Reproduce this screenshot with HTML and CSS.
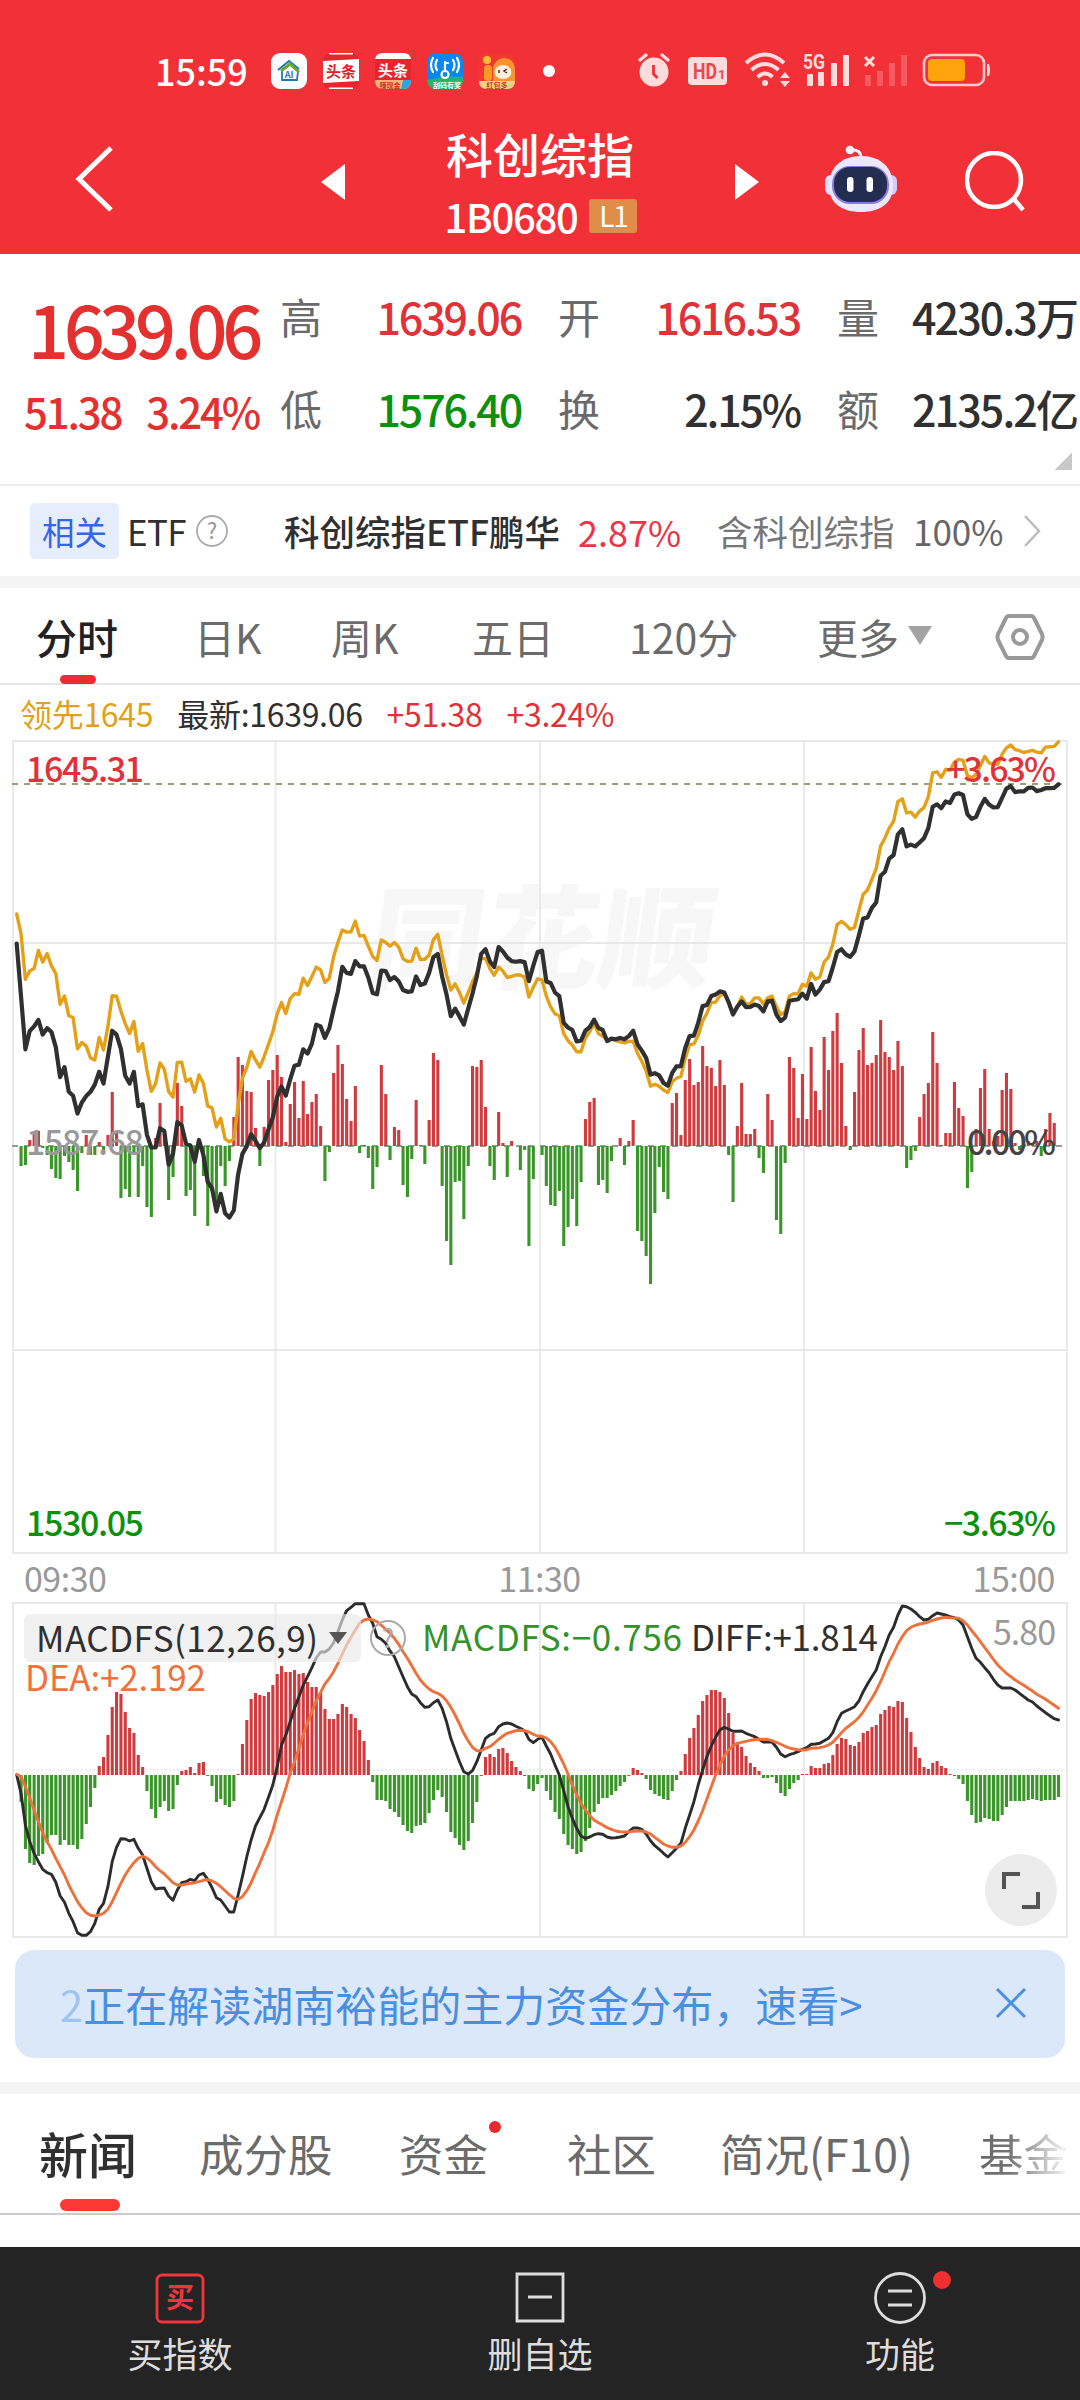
FILE: index.html
```
<!DOCTYPE html>
<html lang="zh-CN">
<head>
    <meta charset="UTF-8">
    <meta name="viewport" content="width=device-width, initial-scale=1.0">
    <title>科创综指 1B0680</title>
    <link rel="stylesheet" href="styles.css">
</head>
<body>
    <header class="top">
        <div class="status">
            <span class="clock">15:59</span>
            <div class="apps">
                <svg class="app" viewBox="0 0 36 36"><rect width="36" height="36" rx="9" fill="#fff"/><path d="M11 18v9h15l1-9" fill="none" stroke="#1c7ab8" stroke-width="1.800"/><path d="M7 17 18 8l10 8" fill="none" stroke="#1c7ab8" stroke-width="2"/><path d="m10 18 9-7 9 8" fill="none" stroke="#6aa92f" stroke-width="3"/><text x="18" y="25" class="app-ai">AI</text></svg>
                <svg class="app" viewBox="0 0 36 36"><rect width="36" height="36" rx="8" fill="#e8252c"/><path d="M0 8 36 6v22L0 30Z" fill="#fff"/><path d="M6 .8h24M6 35.200h24" stroke="#fff" stroke-width="1.500"/><text x="18" y="24" class="app-red">头条</text></svg>
                <svg class="app" viewBox="0 0 36 36"><rect width="36" height="36" rx="8" fill="#e8252c"/><path d="M8 0h20q7 0 8 6H0q1-6 8-6Z" fill="#fff"/><path d="M0 27h36q0 9-8 9H8q-8 0-8-9Z" fill="#f6b47c"/><path d="M28 27h8q0 9-8 9h-2Z" fill="#2ba6e0"/><text x="18" y="22.500" class="app-white">头条</text><text x="15" y="34.500" class="app-mini app-mini-red">赚现金</text></svg>
                <svg class="app" viewBox="0 0 36 36"><rect width="36" height="36" rx="9" fill="#0b87f0"/><path d="M0 27q18-5 36-3v4q-1 8-9 8H9q-8 0-9-9Z" fill="#1fb866"/><g fill="none" stroke="#fff" stroke-width="2.200" stroke-linecap="round"><path d="M10 7q-3 5 0 10M6 5q-4 7 0 14M26 7q3 5 0 10M30 5q4 7 0 14M18 9v9M18 10h3"/><circle cx="18" cy="21.500" r="3.500"/></g><text x="20" y="34.500" class="app-mini">刮码有奖</text></svg>
                <svg class="app" viewBox="0 0 36 36"><rect width="36" height="36" rx="8" fill="#f0382f"/><rect x="5" y="12" width="8" height="16" rx="3.500" fill="#f79a28"/><circle cx="8" cy="7" r="4" fill="#fdbc35"/><path d="M14 16q1-10 11-11 11 1 11 12v11H14Z" fill="#f9932f"/><ellipse cx="24" cy="19" rx="8.500" ry="7" fill="#fff0df"/><path d="M20 17v3M28 16l-3 2 3 2" stroke="#5b2c12" stroke-width="1.500" fill="none"/><path d="M0 28h36q0 8-8 8H8q-8 0-8-8Z" fill="#f9cf8a"/><text x="18" y="34.800" class="app-mini app-mini-red">红包多</text></svg>
            </div>
            <i class="more-dot"></i>
            <svg class="sys" viewBox="0 0 356 44" fill="#ffdcdc">
                <circle cx="17" cy="24" r="14.500"/><path d="M3 12 9 7M31 12l-6-5" stroke="#ffdcdc" stroke-width="3.500" stroke-linecap="round"/><path d="M16.500 17v9l4 4" fill="none" stroke="#f23037" stroke-width="2.800"/>
                <rect x="51" y="9" width="39" height="28" rx="4"/><text x="56" y="31" class="hd" textLength="24" lengthAdjust="spacingAndGlyphs">HD</text><text x="81" y="31" class="hd hd-sub">1</text>
                <g fill="none" stroke="#ffdcdc" stroke-width="4"><path d="M109 15q19-17 38 0M114.500 22q13.500-12 27 0M120.500 29q7.500-7 15 0"/></g><circle cx="128" cy="35" r="3"/><path d="m143 30 5-6 5 6ZM143 33l5 6 5-6Z"/>
                <text x="166" y="21" class="fiveg" textLength="22" lengthAdjust="spacingAndGlyphs">5G</text><rect x="170" y="26" width="6" height="12" rx="1"/><rect x="181" y="24" width="6" height="14" rx="1"/><rect x="194" y="15" width="6" height="23" rx="1"/><rect x="206" y="7" width="6" height="31" rx="1"/>
                <path d="m228 9 9 9M237 9l-9 9" stroke="#ffdcdc" stroke-width="3"/><g opacity=".25"><rect x="228" y="27" width="6" height="11"/><rect x="240" y="23" width="6" height="15"/><rect x="252" y="15" width="6" height="23"/><rect x="264" y="7" width="6" height="31"/></g>
                <rect x="287" y="7" width="60" height="30" rx="8" fill="none" stroke="#ffc9c9" stroke-width="2.600"/><rect x="291" y="11" width="37" height="22" rx="4" fill="#ffa40d"/><path d="M350 16h2q2 6 0 12h-2Z"/>
            </svg>
        </div>
        <nav class="title-bar">
            <svg class="back" viewBox="0 0 40 68"><path d="M36 3 4 34l32 31" fill="none" stroke="#fff" stroke-width="5"/></svg>
            <svg class="prev" viewBox="0 0 24 36"><path d="M24 0v36L0 18Z" fill="#fff"/></svg>
            <div class="name">
                <h1>科创综指</h1>
                <p><span>1B0680</span><b class="level">L1</b></p>
            </div>
            <svg class="next" viewBox="0 0 24 36"><path d="M0 0v36l24-18Z" fill="#fff"/></svg>
            <svg class="robot" viewBox="0 0 74 70">
                <path d="M37 14q0-9-10-8" fill="none" stroke="#f3f0ff" stroke-width="3"/><circle cx="26" cy="6" r="4.300" fill="#f6f3ff"/>
                <rect x="1" y="31" width="12" height="20" rx="6" fill="#e2dcfb"/><rect x="61" y="31" width="12" height="20" rx="6" fill="#d3ccf8"/>
                <path d="M37 12c20 0 32 12 32 30S55 68 37 68 5 60 5 42s12-30 32-30Z" fill="#ebe8fd"/><rect x="8" y="22" width="57" height="38" rx="18" fill="#8a7be0"/><rect x="10" y="23" width="53" height="35" rx="16" fill="#232d4f"/>
                <rect x="23" y="33" width="6.500" height="15" rx="3.200" fill="#fff"/><rect x="42.500" y="33" width="6.500" height="15" rx="3.200" fill="#fff"/>
            </svg>
            <svg class="search" viewBox="0 0 62 62"><circle cx="29" cy="29" r="27" fill="none" stroke="#fff" stroke-width="4.500"/><path d="m48 47 10 12" stroke="#fff" stroke-width="4.500"/></svg>
        </nav>
    </header>

    <section class="quote">
        <div class="last">
            <strong>1639.06</strong>
            <p><span>51.38</span><span>3.24%</span></p>
        </div>
        <dl class="stats">
            <dt>高</dt><dd class="up">1639.06</dd>
            <dt>开</dt><dd class="up">1616.53</dd>
            <dt>量</dt><dd>4230.3万</dd>
            <dt>低</dt><dd class="down">1576.40</dd>
            <dt>换</dt><dd>2.15%</dd>
            <dt>额</dt><dd>2135.2亿</dd>
        </dl>
        <i class="expand"></i>
    </section>

    <section class="related">
        <span class="tag">相关</span>
        <span class="etf">ETF</span>
        <svg class="help" viewBox="0 0 34 34"><circle cx="17" cy="17" r="15" fill="none" stroke="#aaa" stroke-width="1.800"/><text x="17" y="25">?</text></svg>
        <span class="fund">科创综指ETF鹏华</span>
        <span class="fund-rate">2.87%</span>
        <span class="contain">含科创综指</span>
        <span class="contain-rate">100%</span>
        <svg class="arrow" viewBox="0 0 18 32"><path d="m2 1 14 15L2 31" fill="none" stroke="#bbb" stroke-width="2.500"/></svg>
    </section>

    <nav class="periods">
        <span class="active">分时</span>
        <span>日K</span>
        <span>周K</span>
        <span>五日</span>
        <span>120分</span>
        <span class="more">更多</span>
        <svg class="setting" viewBox="0 0 50 48"><path d="M14 3h22q2 0 3 2l8 16q1 3 0 6l-8 16q-1 2-3 2H14q-2 0-3-2L3 27q-1-3 0-6l8-16q1-2 3-2Z" fill="none" stroke="#999" stroke-width="4"/><circle cx="25" cy="24" r="7" fill="none" stroke="#999" stroke-width="4"/></svg>
    </nav>

    <section class="chart">
        <p class="legend"><span class="lead">领先1645</span><span class="now">最新:1639.06</span><span class="up">+51.38</span><span class="up">+3.24%</span></p>
        <svg id="price" class="price" viewBox="0 0 1080 824">
            <g class="watermark" transform="translate(30 0) skewX(-8)"><text x="370" y="250" textLength="345" lengthAdjust="spacingAndGlyphs">同花顺</text></g>
            <path class="grid" d="M13 11H1067V823H13ZM275.500 11V823M540 11V823M804 11V823M13 213H1067M13 620H1067"/>
            <path class="ref-line" d="M12 54H1067"/>
            <path class="zero-line" d="M12 416H1067"/>
            <g id="force"></g>
            <polyline id="lead" class="line lead-line"/>
            <polyline id="index" class="line index-line"/>
            <text x="26" y="52" class="axis up" textLength="118">1645.31</text>
            <text x="1056" y="52" class="axis up end" textLength="110">+3.63%</text>
            <text x="26" y="425" class="axis mid" textLength="118">1587.68</text>
            <text x="1056" y="425" class="axis zero end" textLength="89">0.00%</text>
            <text x="26" y="806" class="axis down" textLength="118">1530.05</text>
            <text x="1056" y="806" class="axis down end" textLength="112">−3.63%</text>
        </svg>
        <div class="times"><span>09:30</span><span>11:30</span><span>15:00</span></div>
        <svg id="macd" class="macd" viewBox="0 0 1080 340">
            <path class="grid" d="M13 3H1067V337H13ZM275.500 3V337M540 3V337M804 3V337"/>
            <path class="zero-dots" d="M13 170H1067"/>
            <g id="macdBars"></g>
            <polyline id="diff" class="line diff-line"/>
            <polyline id="dea" class="line dea-line"/>
            <rect x="24" y="14" width="337" height="48" rx="6" class="picker"/>
            <text x="36" y="52" class="label" textLength="282">MACDFS(12,26,9)</text>
            <path d="M329 32h18l-9 12Z" fill="#555"/>
            <circle cx="388" cy="38" r="17" class="tip"/><text x="388" y="48" class="tip-mark">?</text>
            <text x="422" y="51" class="label green" textLength="260">MACDFS:−0.756</text>
            <text x="691" y="51" class="label" textLength="187">DIFF:+1.814</text>
            <text x="25" y="91" class="label orange" textLength="181">DEA:+2.192</text>
            <text x="1056" y="45" class="axis grey end" textLength="63">5.80</text>
            <circle cx="1021" cy="290" r="36" fill="#ececec"/>
            <path d="M1004 289v-15h16M1022 307h16v-15" fill="none" stroke="#555" stroke-width="4"/>
        </svg>
    </section>

    <aside class="notice">
        <p><i>2</i>正在解读湖南裕能的主力资金分布，速看&gt;</p>
        <svg viewBox="0 0 32 32"><path d="m2 2 28 28M30 2 2 30" stroke="#4a90e2" stroke-width="3"/></svg>
    </aside>

    <nav class="tabs">
        <span class="active">新闻</span>
        <span>成分股</span>
        <span class="dot">资金</span>
        <span>社区</span>
        <span>简况(F10)</span>
        <span class="fade">基金</span>
    </nav>

    <footer class="bottom">
        <div>
            <svg viewBox="0 0 54 54"><rect x="4" y="5" width="46" height="47" rx="5" fill="none" stroke="#f0353c" stroke-width="2.800"/><text x="27" y="38" class="buy">买</text></svg>
            <span>买指数</span>
        </div>
        <div>
            <svg viewBox="0 0 54 54"><path d="M4 4h46v47H4ZM15 27h24" fill="none" stroke="#ddd" stroke-width="2.800"/></svg>
            <span>删自选</span>
        </div>
        <div>
            <svg viewBox="0 0 54 54"><circle cx="27" cy="28" r="24.500" fill="none" stroke="#ddd" stroke-width="2.800"/><path d="M15 21h24M15 35h24" stroke="#ddd" stroke-width="3"/></svg>
            <i class="badge"></i>
            <span>功能</span>
        </div>
    </footer>
    <script src="chart.js"></script>
</body>
</html>
```
FILE: styles.css
```
* {
    box-sizing: border-box;
}
body {
    margin: 0;
    width: 1080px;
    height: 2400px;
    overflow: hidden;
    display: flex;
    flex-direction: column;
    background: #fff;
    color: #303030;
    font-family: "Noto Sans CJK SC", sans-serif;
}
p, h1, dl, dd {
    margin: 0;
}
i {
    font-style: normal;
}
svg {
    display: block;
    flex: none;
}
span {
    white-space: nowrap;
}
.up {
    color: #e03238;
    fill: #e03238;
}
.down {
    color: #0d900d;
    fill: #0d900d;
}

/* header */
.top {
    height: 254px;
    flex: none;
    background: #f23037;
    color: #fff;
}
.status {
    height: 124px;
    padding: 48px 0 30px 155px;
    display: flex;
    align-items: center;
}
.clock {
    width: 94px;
    padding-bottom: 3px;
    font-size: 36px;
    font-weight: 500;
    letter-spacing: 0;
}
.apps {
    display: flex;
    gap: 16px;
    margin-left: 22px;
}
.app {
    width: 36px;
    height: 36px;
}
.app text {
    text-anchor: middle;
    font-weight: bold;
}
.app-ai {
    font-size: 9px;
    fill: #1c7ab8;
}
.app-red {
    font-size: 15px;
    fill: #d9232a;
}
.app-white {
    font-size: 15px;
    fill: #fff;
}
.app-mini {
    font-size: 7px;
    fill: #fff;
}
.app-mini-red {
    fill: #c43a20;
}
.more-dot {
    width: 12px;
    height: 12px;
    margin-left: 28px;
    border-radius: 50%;
    background: #fff;
}
.sys {
    width: 356px;
    height: 44px;
    margin: -2px 0 0 82px;
}
.hd {
    font: bold 22px "Roboto", sans-serif;
    fill: #e8484e;
}
.hd-sub {
    font-size: 13px;
}
.fiveg {
    font: bold 20px "Roboto", sans-serif;
}
.title-bar {
    height: 130px;
    display: flex;
    align-items: center;
    padding-left: 75px;
}
.back {
    width: 40px;
    height: 68px;
    margin-top: -20px;
}
.prev {
    width: 24px;
    height: 36px;
    margin: -14px 0 0 206px;
}
.next {
    width: 24px;
    height: 36px;
    margin-top: -14px;
}
.name {
    width: 390px;
    text-align: center;
}
.name h1 {
    margin-top: -7px;
    font-size: 47px;
    line-height: 60px;
    font-weight: 500;
}
.name p {
    height: 66px;
    display: flex;
    justify-content: center;
    align-items: center;
    gap: 12px;
    padding-left: 2px;
    font-size: 40px;
    font-weight: 500;
    letter-spacing: -1.3px;
}
.level {
    width: 48px;
    height: 34px;
    border-radius: 3px;
    background: #e08d4a;
    font-size: 28px;
    font-weight: 400;
    line-height: 33px;
}
.robot {
    width: 74px;
    height: 70px;
    margin: -20px 0 0 65px;
}
.search {
    width: 62px;
    height: 62px;
    margin: -14px 0 0 67px;
}

/* quote */
.quote {
    position: relative;
    height: 232px;
    flex: none;
    display: flex;
    border-bottom: 2px solid #ececec;
}
.last {
    width: 280px;
    color: #e53030;
    padding: 25px 0 0 24px;
}
.last strong {
    display: block;
    padding-left: 4px;
    font-size: 72px;
    font-weight: 500;
    line-height: 98px;
    letter-spacing: -5.4px;
}
.last p {
    display: flex;
    gap: 25px;
    font-size: 42px;
    font-weight: 500;
    line-height: 68px;
    letter-spacing: -2.2px;
}
.stats {
    display: grid;
    grid-template-columns: 42px 199px 79px 200px 79px 1fr;
    grid-template-rows: 92px 92px;
    padding-top: 16px;
    font-size: 43px;
}
.stats dt {
    color: #6a6a6a;
    line-height: 92px;
    font-size: 42px;
}
.stats dt:nth-of-type(3n+2), .stats dt:nth-of-type(3n) {
    padding-left: 37px;
}
.stats dd {
    text-align: right;
    font-weight: 500;
    line-height: 92px;
    letter-spacing: -2.2px;
    white-space: nowrap;
}
.stats dd:nth-of-type(3n) {
    padding-left: 33px;
    text-align: left;
    letter-spacing: -1.9px;
}
.expand {
    position: absolute;
    right: 8px;
    bottom: 14px;
    width: 18px;
    height: 18px;
    background: linear-gradient(135deg, transparent 50%, #c8c8c8 50%);
}

/* related ETF row */
.related {
    height: 102px;
    flex: none;
    display: flex;
    align-items: center;
    padding: 0 0 1px 30px;
    font-size: 35px;
    border-bottom: 12px solid #f4f4f4;
}
.tag {
    width: 89px;
    height: 56px;
    border-radius: 5px;
    background: #e6edfc;
    color: #3565e8;
    font-size: 32.5px;
    line-height: 55px;
    text-align: center;
}
.etf {
    margin-left: 8px;
    width: 62px;
    letter-spacing: -0.7px;
}
.help {
    width: 34px;
    height: 34px;
    margin-left: 6px;
}
.help text {
    font-size: 22px;
    text-anchor: middle;
    fill: #999;
}
.fund {
    width: 276px;
    margin-left: 55px;
    font-size: 35.5px;
    font-weight: 500;
}
.fund-rate {
    width: 100px;
    margin-left: 18px;
    font-size: 36px;
    color: #ee3348;
}
.contain {
    width: 178px;
    margin-left: 39px;
    font-size: 35.5px;
    color: #777;
}
.contain-rate {
    width: 90px;
    margin-left: 18px;
    color: #666;
}
.arrow {
    width: 18px;
    height: 32px;
    margin-left: 20px;
}

/* period tabs */
.periods {
    height: 97px;
    flex: none;
    display: flex;
    align-items: center;
    border-bottom: 2px solid #e6e6e6;
    padding-left: 36px;
    font-size: 41px;
    color: #6b6b6b;
}
.periods span:nth-child(1) { width: 158px; }
.periods span:nth-child(2) { width: 137px; }
.periods span:nth-child(3) { width: 141px; }
.periods span:nth-child(4) { width: 157px; }
.periods span:nth-child(5) { width: 188px; }
.periods .active {
    position: relative;
    color: #222;
    font-weight: 500;
}
.periods .active::after {
    content: "";
    position: absolute;
    left: 24px;
    bottom: -18px;
    width: 36px;
    height: 9px;
    border-radius: 5px;
    background: #ea2e30;
}
.periods .more {
    display: flex;
    align-items: center;
    gap: 9px;
    width: 178px;
}
.more::after {
    content: "";
    border: 12px solid transparent;
    border-top: 19px solid #a3a3a3;
    border-bottom: 0;
}
.setting {
    width: 50px;
    height: 48px;
    margin-top: 2px;
}

/* charts */
.chart {
    flex: none;
}
.legend {
    height: 45px;
    padding: 6px 0 0 20px;
    display: flex;
    gap: 24px;
    font-size: 32px;
    line-height: 44px;
}
.legend .lead {
    color: #e2a11c;
}
.legend span {
    letter-spacing: -0.3px;
}
.price {
    width: 1080px;
    height: 824px;
}
.grid {
    fill: none;
    stroke: #e8e8e8;
    stroke-width: 1.8;
}
.ref-line, .zero-line {
    stroke: #a59a70;
    stroke-width: 1.8;
    stroke-dasharray: 6 6;
}
.zero-line {
    stroke: #999;
}
.zero-dots {
    stroke: #ddd;
    stroke-dasharray: 2 2;
}
.line {
    fill: none;
    stroke-linejoin: round;
    stroke-linecap: round;
}
.lead-line {
    stroke: #e3a018;
    stroke-width: 3.4;
}
.index-line {
    stroke: #303030;
    stroke-width: 4.2;
}
.diff-line {
    stroke: #2c2c2c;
    stroke-width: 2.9;
}
.dea-line {
    stroke: #ee713c;
    stroke-width: 2.9;
}
.bar-up {
    fill: #cf3b3e;
}
.bar-down {
    fill: #3b962a;
}
.watermark text {
    font-size: 112px;
    font-weight: 900;
    fill: #f7f7f7;
}
.axis {
    font-size: 34px;
    font-weight: 500;
}
.end {
    text-anchor: end;
}
.mid, .grey {
    fill: #999;
}
.zero {
    fill: #444;
}
.axis.grey {
    font-weight: 400;
}
.times {
    display: flex;
    justify-content: space-between;
    height: 46px;
    padding: 0 25px 0 24px;
    font-size: 34px;
    line-height: 48px;
    letter-spacing: -0.5px;
    color: #999;
}
.macd {
    width: 1080px;
    height: 340px;
}
.picker {
    fill: #e9e9e9;
    opacity: 0.65;
}
.label {
    font-size: 35px;
    fill: #303030;
}
.green {
    fill: #35912a;
}
.orange {
    fill: #f0713a;
}
.tip {
    fill: none;
    stroke: #aaa;
    stroke-width: 2;
}
.tip-mark {
    font-size: 26px;
    text-anchor: middle;
    fill: #aaa;
}

/* notice */
.notice {
    height: 108px;
    flex: none;
    margin: 10px 15px 24px;
    padding: 0 38px 2px 45px;
    display: flex;
    align-items: center;
    justify-content: space-between;
    border-radius: 19px;
    background: #dae8fa;
    color: #4a8fdf;
    font-size: 42px;
}
.notice i {
    opacity: 0.4;
}
.notice svg {
    width: 32px;
    height: 32px;
}

/* content tabs */
.tabs {
    height: 133px;
    flex: none;
    display: flex;
    align-items: center;
    padding: 0 0 2px 39px;
    border-top: 12px solid #f4f4f4;
    border-bottom: 2px solid #ccc;
    font-size: 44.5px;
    color: #6b6b6b;
    overflow: hidden;
}
.tabs span:nth-child(1) { width: 160px; }
.tabs span:nth-child(2) { width: 200px; }
.tabs span:nth-child(3) { width: 168px; }
.tabs span:nth-child(4) { width: 153px; }
.tabs span:nth-child(5) { width: 259px; }
.tabs span {
    position: relative;
}
.tabs .active {
    color: #303030;
    font-size: 49px;
    font-weight: 500;
}
.tabs .active::after {
    content: "";
    position: absolute;
    left: 21px;
    bottom: -23px;
    width: 60px;
    height: 12px;
    border-radius: 6px;
    background: #fb3833;
}
.tabs .dot::after {
    content: "";
    position: absolute;
    left: 90px;
    top: 1px;
    width: 12px;
    height: 12px;
    border-radius: 50%;
    background: #e8282c;
}
.tabs .fade {
    background: linear-gradient(90deg, #666, #777 35%, #eee 95%);
    background-clip: text;
    -webkit-background-clip: text;
    color: transparent;
}

/* bottom bar */
.bottom {
    height: 153px;
    flex: none;
    margin-top: auto;
    background: #242424;
    color: #ddd;
    display: grid;
    grid-template-columns: repeat(3, 1fr);
}
.bottom div {
    position: relative;
    display: flex;
    flex-direction: column;
    align-items: center;
    padding-top: 23px;
    font-size: 35px;
    line-height: 58px;
}
.bottom svg {
    width: 54px;
    height: 54px;
}
.buy {
    font-size: 28px;
    font-weight: bold;
    text-anchor: middle;
    fill: #f0353c;
}
.badge {
    position: absolute;
    left: 213px;
    top: 24px;
    width: 18px;
    height: 18px;
    border-radius: 50%;
    background: #ee3030;
}
```
FILE: chart.js
```
// one value per trading minute
const STEP = 4.341;
const LEFT = 16.7;

const indexData = [
    598,745,894,843,830,812,853,835,845,888,972,944,1013,1024,1074,1043,1025,1013,993,957,
    990,915,842,853,893,968,990,957,1053,1048,1133,1169,1169,1115,1123,1217,1187,1098,1107,1158,
    1163,1209,1148,1190,1265,1283,1348,1299,1353,1365,1345,1245,1187,1165,1132,1150,1171,1155,1118,1085,
    1027,998,1024,978,940,937,894,906,878,825,830,862,835,782,732,663,680,683,647,662,
    662,693,736,740,674,675,700,692,704,728,733,732,690,714,710,680,636,627,690,740,
    801,780,802,825,780,738,690,627,614,648,664,608,620,637,647,649,647,650,703,660,
    622,618,704,708,735,745,820,833,840,872,870,842,832,811,834,840,871,864,866,862,
    866,857,842,880,898,918,965,961,967,988,996,960,942,941,890,857,856,820,773,770,
    745,741,732,735,762,797,775,760,776,775,769,773,788,760,758,797,815,805,758,756,
    754,738,752,711,741,727,706,703,665,622,614,628,635,620,575,528,525,498,483,408,
    397,360,350,292,278,326,321,326,315,303,275,215,208,219,200,204,181,177,182,236,
    249,243,215,193,209,217,216,190,164,157,174,172,172,162,161,171,168,163,163,162,152
];
const leadData = [
    515,570,698,675,668,617,650,626,660,682,768,745,800,805,893,875,885,918,924,861,
    896,830,744,745,787,822,850,816,900,878,952,1012,990,932,950,1012,1028,931,930,984,
    977,1014,966,990,1053,1058,1112,1087,1145,1153,1145,1050,975,945,900,924,944,915,880,845,
    795,763,794,752,738,740,695,715,690,664,672,707,695,635,595,560,566,565,535,577,
    575,605,634,645,588,595,605,595,608,640,648,647,611,643,642,630,587,572,630,685,
    728,711,735,765,735,705,680,640,640,668,687,664,675,693,690,686,686,692,748,720,
    697,700,745,775,795,800,850,870,882,901,901,862,845,820,850,857,868,866,870,873,
    876,872,871,905,928,955,997,992,998,1008,1015,985,975,970,920,881,879,855,815,793,
    763,762,744,738,762,790,775,748,767,766,750,750,767,750,745,775,797,790,745,738,
    739,712,717,680,698,692,650,636,600,545,536,545,558,553,505,460,448,418,388,325,
    303,275,256,200,193,232,230,244,227,217,187,120,117,133,110,113,90,82,85,127,
    134,124,100,74,92,96,96,68,50,42,55,58,63,60,57,62,64,48,47,46,33
];
const forceData = [
    0,-20,-19,6,14,15,-2,-9,-23,-32,-33,-10,-16,-24,-45,-7,11,-9,-9,4,
    -5,11,54,14,-52,-43,-51,-8,-51,-20,-61,-71,8,43,12,-54,-31,63,40,-50,
    -44,-70,3,-30,-80,-45,-64,-20,-40,-15,29,89,81,55,54,18,-20,19,66,76,
    91,69,4,42,64,28,65,32,44,52,20,-35,-6,73,101,82,47,25,60,-7,
    1,-12,-43,-21,81,52,-14,19,16,-39,-51,-13,46,1,-18,26,93,86,-40,-95,
    -119,-36,-35,-73,-20,80,79,86,39,-20,-34,34,3,-31,5,0,-24,-4,-100,-33,
    0,-9,-40,-59,-60,-45,-100,-81,-53,-80,-36,27,44,48,-39,-34,-47,-15,0,8,
    -19,5,26,-85,-95,-110,-138,-67,-21,-46,-53,43,53,11,66,87,61,64,100,80,
    78,60,86,61,-9,-56,20,63,12,12,17,-12,-27,52,26,-74,-88,-17,89,78,
    28,72,27,99,55,36,109,76,115,133,83,20,-4,54,96,118,81,83,91,126,
    94,89,76,105,80,-22,-14,-5,29,52,63,114,83,1,13,13,64,38,30,-42,
    -26,17,58,77,17,5,10,56,73,57,3,-4,2,5,3,5,-10,17,33,23,0
];
const macdData = [
    0,-27,-74,-88,-90,-81,-79,-68,-60,-60,-70,-65,-70,-70,-74,-64,-49,-32,-13,9,
    18,40,68,83,81,63,47,42,20,8,-16,-34,-43,-32,-26,-36,-34,-10,4,5,
    8,2,12,13,-1,-11,-27,-24,-30,-32,-26,1,31,55,76,82,80,79,83,90,
    101,109,103,103,105,101,102,93,88,88,82,66,56,56,61,71,68,61,57,45,
    34,15,-7,-25,-25,-26,-34,-37,-42,-50,-56,-58,-51,-50,-48,-38,-25,-15,-22,-37,
    -57,-63,-70,-75,-66,-48,-27,-1,18,21,18,26,27,22,14,8,4,-1,-14,-16,
    -9,-3,-16,-25,-37,-44,-59,-70,-74,-79,-77,-66,-53,-37,-29,-23,-23,-20,-16,-11,
    -7,-1,7,5,2,-4,-15,-19,-21,-24,-25,-16,-5,4,21,37,47,60,74,80,
    85,85,83,77,62,42,33,28,19,12,8,4,-3,-3,-2,-8,-18,-21,-14,-8,
    -5,1,1,9,7,7,11,12,20,31,37,36,30,29,33,42,44,48,50,61,
    65,69,68,74,73,57,43,28,17,8,6,12,14,9,7,1,-1,-4,-9,-26,
    -40,-48,-47,-43,-44,-46,-46,-40,-32,-26,-26,-26,-26,-25,-24,-25,-26,-25,-25,-25,-22
];
const diffData = [
    825,880,975,1025,1060,1085,1108,1118,1123,1147,1187,1207,1240,1265,1298,1306,1306,1295,1270,1228,
    1210,1160,1085,1042,1016,1017,1023,1018,1045,1065,1105,1145,1167,1165,1164,1188,1201,1170,1148,1145,
    1138,1142,1125,1120,1138,1163,1193,1200,1218,1236,1236,1185,1130,1070,1020,978,953,928,892,855,
    800,735,705,665,625,590,556,530,503,474,456,456,447,428,395,360,332,322,311,311,
    311,345,370,410,418,430,453,470,500,530,560,582,590,608,622,620,608,600,625,665,
    715,750,785,815,822,812,785,750,715,705,700,680,672,669,672,679,685,692,718,728,
    718,712,738,762,795,825,872,920,955,985,1008,1015,1011,1004,1001,1003,1011,1014,1013,1011,
    1008,995,984,984,988,1002,1022,1037,1048,1060,1071,1058,1045,1030,985,945,905,855,810,770,
    738,712,690,682,687,694,694,693,700,705,710,718,726,725,726,742,762,770,764,760,
    755,748,743,733,732,730,722,715,698,665,640,633,627,620,603,575,552,530,510,470,
    440,405,382,345,318,320,327,337,350,360,358,347,339,342,345,350,353,360,375,410,
    445,475,487,503,518,538,555,564,564,564,570,580,590,600,606,618,628,638,647,656,660
];
const deaData = [
    823,830,860,893,930,965,998,1025,1048,1075,1100,1125,1155,1180,1205,1223,1238,1246,1248,1246,
    1240,1228,1205,1178,1150,1125,1105,1088,1075,1069,1074,1085,1100,1112,1122,1135,1148,1155,1155,1152,
    1150,1148,1145,1141,1139,1143,1150,1160,1172,1184,1195,1198,1190,1172,1148,1118,1090,1058,1028,990,
    945,905,865,820,785,745,705,668,635,603,577,552,535,515,490,462,435,412,390,370,
    360,357,359,365,376,388,400,415,433,455,475,497,520,540,555,567,575,580,588,602,
    622,645,672,700,723,742,752,752,745,740,730,718,708,700,696,692,691,692,696,703,
    708,709,714,725,742,765,792,822,855,885,910,930,947,960,968,975,983,988,993,995,
    996,996,994,993,993,996,1002,1012,1022,1032,1038,1042,1042,1038,1027,1010,990,963,932,897,
    860,825,795,768,750,738,730,727,724,721,719,718,718,718,722,727,733,739,744,747,
    749,750,749,745,744,743,740,735,727,713,698,685,675,665,652,636,615,595,572,545,
    515,485,460,432,410,392,382,376,372,370,366,361,357,354,352,353,354,355,362,375,
    392,408,425,443,460,478,495,508,520,530,540,548,556,565,573,583,590,598,607,616,625
];

function drawLine(id, data, scale, offset) {
    const points = data.map((v, i) => `${(LEFT + i * STEP).toFixed(1)},${(v / scale - offset).toFixed(1)}`);
    document.getElementById(id).setAttribute("points", points.join(" "));
}

function drawBars(id, data, base) {
    document.getElementById(id).innerHTML = data.map((v, i) => {
        const x = (LEFT + i * STEP - 1.5).toFixed(1);
        const y = v > 0 ? base - v : base;
        return `<rect class="${v > 0 ? "bar-up" : "bar-down"}" x="${x}" y="${y}" width="3.1" height="${Math.abs(v)}"/>`;
    }).join("");
}

drawBars("force", forceData, 416);
drawLine("lead", leadData, 2.8, 0);
drawLine("index", indexData, 2.8, 0);
drawBars("macdBars", macdData, 175);
drawLine("diff", diffData, 3, 100);
drawLine("dea", deaData, 3, 100);
```
